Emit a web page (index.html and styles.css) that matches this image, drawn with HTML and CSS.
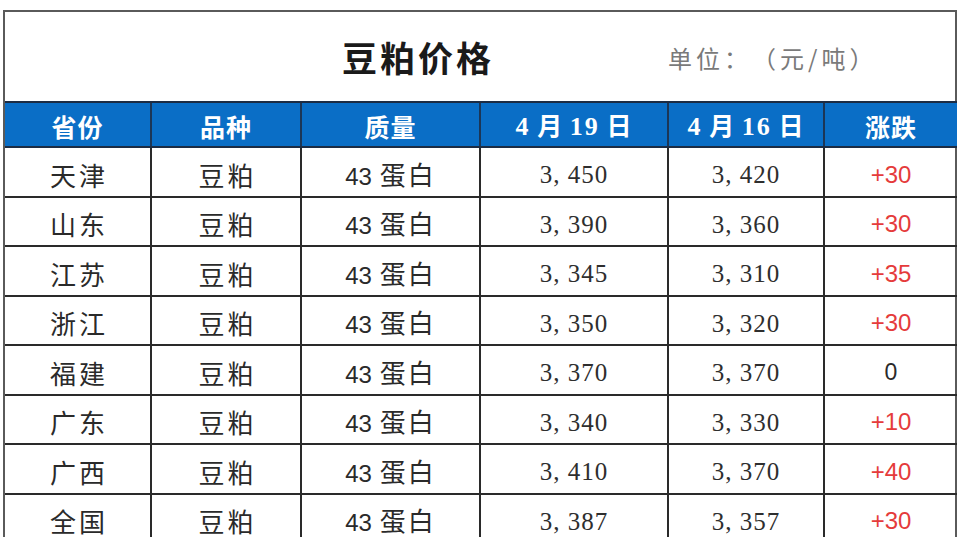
FILE: index.html
```html
<!DOCTYPE html>
<html lang="zh-CN">
<head>
<meta charset="utf-8">
<title>豆粕价格</title>
<link rel="stylesheet" href="styles.css">
</head>
<body>
<div class="sheet">
  <div class="title-row">
    <div class="title">豆粕价格</div>
    <div class="unit">单位：（元/吨）</div>
  </div>
  <table class="grid">
    <colgroup>
      <col class="c1"><col class="c2"><col class="c3"><col class="c4"><col class="c5"><col class="c6">
    </colgroup>
    <thead>
      <tr>
        <th>省份</th><th>品种</th><th>质量</th>
        <th><span class="d">4</span> 月 <span class="d">19</span> 日</th>
        <th><span class="d">4</span> 月 <span class="d">16</span> 日</th>
        <th>涨跌</th>
      </tr>
    </thead>
    <tbody>
      <tr><td class="cn">天津</td><td class="cn">豆粕</td><td class="q"><span class="n">43</span> 蛋白</td><td class="p">3,&nbsp;450</td><td class="p">3,&nbsp;420</td><td class="up">+30</td></tr>
      <tr><td class="cn">山东</td><td class="cn">豆粕</td><td class="q"><span class="n">43</span> 蛋白</td><td class="p">3,&nbsp;390</td><td class="p">3,&nbsp;360</td><td class="up">+30</td></tr>
      <tr><td class="cn">江苏</td><td class="cn">豆粕</td><td class="q"><span class="n">43</span> 蛋白</td><td class="p">3,&nbsp;345</td><td class="p">3,&nbsp;310</td><td class="up">+35</td></tr>
      <tr><td class="cn">浙江</td><td class="cn">豆粕</td><td class="q"><span class="n">43</span> 蛋白</td><td class="p">3,&nbsp;350</td><td class="p">3,&nbsp;320</td><td class="up">+30</td></tr>
      <tr><td class="cn">福建</td><td class="cn">豆粕</td><td class="q"><span class="n">43</span> 蛋白</td><td class="p">3,&nbsp;370</td><td class="p">3,&nbsp;370</td><td class="flat">0</td></tr>
      <tr><td class="cn">广东</td><td class="cn">豆粕</td><td class="q"><span class="n">43</span> 蛋白</td><td class="p">3,&nbsp;340</td><td class="p">3,&nbsp;330</td><td class="up">+10</td></tr>
      <tr><td class="cn">广西</td><td class="cn">豆粕</td><td class="q"><span class="n">43</span> 蛋白</td><td class="p">3,&nbsp;410</td><td class="p">3,&nbsp;370</td><td class="up">+40</td></tr>
      <tr><td class="cn">全国</td><td class="cn">豆粕</td><td class="q"><span class="n">43</span> 蛋白</td><td class="p">3,&nbsp;387</td><td class="p">3,&nbsp;357</td><td class="up">+30</td></tr>
    </tbody>
  </table>
</div>
</body>
</html>
```

FILE: styles.css
```css
html, body {
  margin: 0;
  padding: 0;
  background: #ffffff;
  overflow: hidden;
}

body {
  font-family: "Noto Sans CJK SC", "Noto Sans", sans-serif;
  color: #222222;
}

.sheet {
  margin: 10px 0 0 3px;
  width: 954px;
  box-sizing: border-box;
  border: 2px solid #5a5a5a;
  border-bottom: none;
}

.title-row {
  height: 89px;
  display: flex;
  align-items: center;
  box-sizing: border-box;
  padding-left: 337px;
}

.title {
  font-size: 35px;
  font-weight: 700;
  letter-spacing: 3px;
  color: #1a1a1a;
  line-height: 1;
}

.unit {
  margin-left: 174px;
  font-size: 24px;
  color: #7a7a7a;
  letter-spacing: 4px;
  line-height: 1;
  padding-top: 2px;
  text-spacing-trim: space-all;
}

.grid {
  width: 952px;
  border-collapse: collapse;
  table-layout: fixed;
}

.c1 { width: 146px; }
.c2 { width: 150px; }
.c3 { width: 179px; }
.c4 { width: 188px; }
.c5 { width: 156px; }
.c6 { width: 133px; }

.grid th {
  height: 45px;
  box-sizing: border-box;
  padding: 3px 0 0 0;
  background: #0a6ec6;
  color: #ffffff;
  font-size: 25px;
  font-weight: 700;
  letter-spacing: 1px;
  text-align: center;
  vertical-align: middle;
  border-left: 2px solid #1c3656;
  border-top: 2px solid #1c2c44;
  border-bottom: 2px solid #1c2c44;
  line-height: 1;
}

.grid th:first-child { border-left: none; }

.grid th .d {
  font-family: "Liberation Serif", serif;
  font-weight: 700;
  font-size: 26px;
  letter-spacing: 2px;
}

.grid td {
  height: 49.5px;
  box-sizing: border-box;
  padding: 6px 0 0 0;
  text-align: center;
  vertical-align: middle;
  border-left: 2px solid #2a2a2a;
  border-bottom: 2px solid #2a2a2a;
  line-height: 1;
}

.grid td:first-child { border-left: none; }

.cn {
  font-size: 26px;
  letter-spacing: 3px;
  text-indent: 3px;
  color: #2a2a2a;
}

.q {
  font-size: 26px;
  letter-spacing: 2px;
  color: #2a2a2a;
}

.q .n {
  font-family: "Liberation Sans", sans-serif;
  font-size: 24px;
  letter-spacing: 0;
}

.p {
  font-family: "Liberation Serif", serif;
  font-size: 25px;
  letter-spacing: 1px;
  color: #2e2e2e;
}

.up {
  font-family: "Liberation Sans", sans-serif;
  font-size: 24px;
  color: #e53b3b;
}

.flat {
  font-family: "Liberation Sans", sans-serif;
  font-size: 23px;
  color: #2a2a2a;
}
```
